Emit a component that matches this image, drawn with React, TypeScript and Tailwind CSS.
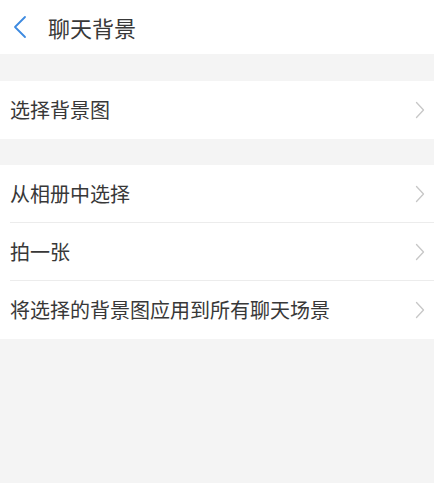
const font = { fontFamily: '"Noto Sans CJK SC", "Noto Sans", sans-serif' };

function Chevron() {
  return (
    <svg width="10" height="18" viewBox="0 0 10 18" fill="none" className="text-[#c7c7c7]">
      <path d="M1.5 1.5l7 7.5-7 7.5" stroke="currentColor" strokeWidth="1.3" strokeLinecap="round" strokeLinejoin="round" />
    </svg>
  );
}

function BackIcon() {
  return (
    <svg width="16" height="24" viewBox="0 0 16 24" fill="none" className="text-[#3d8ae0]">
      <path d="M13 2L3 12l10 10" stroke="currentColor" strokeWidth="1.8" strokeLinecap="round" strokeLinejoin="round" />
    </svg>
  );
}

function Row({ label, last }: { label: string; last?: boolean }) {
  return (
    <div className="flex h-[58px] items-center pl-[10px]">
      <div className={`flex h-full flex-1 items-center justify-between pr-[9px] ${last ? "" : "border-b border-[#ececec]"}`}>
        <span className="text-[20px] text-[#383838]">{label}</span>
        <Chevron />
      </div>
    </div>
  );
}

export default function App() {
  return (
    <div className="flex h-[483px] w-full flex-col bg-[#f4f4f4]" style={font}>
      <header className="flex h-[54px] items-center bg-white pl-[12px]">
        <BackIcon />
        <span className="ml-[20px] text-[22px] text-[#383838]">聊天背景</span>
      </header>
      <div className="mt-[27px] bg-white">
        <Row label="选择背景图" last />
      </div>
      <div className="mt-[26px] bg-white">
        <Row label="从相册中选择" />
        <Row label="拍一张" />
        <Row label="将选择的背景图应用到所有聊天场景" last />
      </div>
    </div>
  );
}
